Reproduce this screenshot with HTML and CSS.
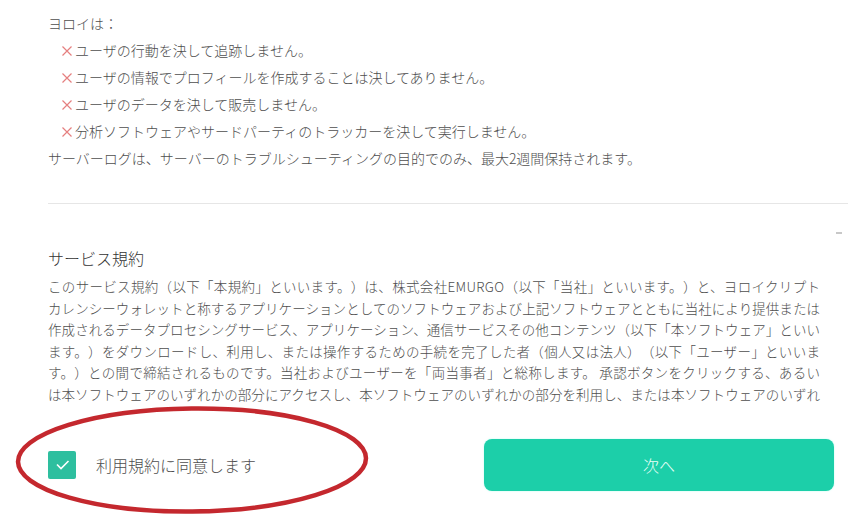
FILE: index.html
```html
<!DOCTYPE html>
<html lang="ja">
<head>
<meta charset="utf-8">
<title>サービス規約</title>
<link rel="stylesheet" href="styles.css">
</head>
<body>
<div class="page">
  <div class="scroll">
    <div class="content">
      <section class="privacy">
        <p class="line">ヨロイは：</p>
        <ul class="nots">
          <li><svg class="cross" viewBox="0 0 14 14" width="14" height="14"><path d="M2.5 2.5 L11.5 11.5 M11.5 2.5 L2.5 11.5"/></svg>ユーザの行動を決して追跡しません。</li>
          <li><svg class="cross" viewBox="0 0 14 14" width="14" height="14"><path d="M2.5 2.5 L11.5 11.5 M11.5 2.5 L2.5 11.5"/></svg>ユーザの情報でプロフィールを作成することは決してありません。</li>
          <li><svg class="cross" viewBox="0 0 14 14" width="14" height="14"><path d="M2.5 2.5 L11.5 11.5 M11.5 2.5 L2.5 11.5"/></svg>ユーザのデータを決して販売しません。</li>
          <li><svg class="cross" viewBox="0 0 14 14" width="14" height="14"><path d="M2.5 2.5 L11.5 11.5 M11.5 2.5 L2.5 11.5"/></svg>分析ソフトウェアやサードパーティのトラッカーを決して実行しません。</li>
        </ul>
        <p class="line">サーバーログは、サーバーのトラブルシューティングの目的でのみ、最大2週間保持されます。</p>
      </section>
      <hr class="divider">
      <section class="terms">
        <h2 class="terms-title">サービス規約</h2>
        <p class="terms-text">このサービス規約（以下「本規約」といいます。）は、株式会社<span class="latin">EMURGO</span>（以下「当社」といいます。）と、ヨロイクリプト<br>カレンシーウォレットと称するアプリケーションとしてのソフトウェアおよび上記ソフトウェアとともに当社により提供または<br>作成されるデータプロセシングサービス、アプリケーション、通信サービスその他コンテンツ（以下「本ソフトウェア」といい<br>ます。）をダウンロードし、利用し、または操作するための手続を完了した者（個人又は法人）（以下「ユーザー」といいま<br>す。）との間で締結されるものです。当社およびユーザーを「両当事者」と総称します。 承認ボタンをクリックする、あるい<br>は本ソフトウェアのいずれかの部分にアクセスし、本ソフトウェアのいずれかの部分を利用し、または本ソフトウェアのいずれ</p>
      </section>
    </div>
    <div class="thumb"></div>
  </div>
  <footer class="actions">
    <label class="agree">
      <span class="checkbox"><svg viewBox="0 0 28 28" width="28" height="28"><path d="M9 13.5 L13 17.5 L20.5 10"/></svg></span>
      <span class="agree-text">利用規約に同意します</span>
    </label>
    <button class="next" type="button">次へ</button>
  </footer>
  <svg class="annotation" viewBox="0 0 862 530" width="862" height="530"><ellipse cx="192" cy="460" rx="174" ry="51.5" transform="rotate(-0.6 192 460)"/></svg>
</div>
</body>
</html>
```
FILE: styles.css
```css
* { box-sizing: border-box; }
html, body { margin: 0; padding: 0; background: #ffffff; }
body {
  font-family: "Noto Sans CJK JP", "Noto Sans", sans-serif;
  font-weight: 300;
  color: #4e4e4e;
  text-spacing-trim: space-all;
}
.page {
  position: relative;
  width: 862px;
  height: 530px;
  overflow: hidden;
}
.scroll {
  position: relative;
  height: 405px;
  overflow: hidden;
}
.content {
  padding: 10px 14px 0 48px;
}
.privacy { font-size: 14px; line-height: 27px; }
.line { margin: 0; }
.nots { list-style: none; margin: 0; padding: 0 0 0 12px; }
.nots li { display: flex; align-items: center; }
.cross {
  flex: none;
  margin-right: 1px;
  fill: none;
  stroke: #e57f7f;
  stroke-width: 1.2;
}
.divider {
  border: 0;
  border-top: 1px solid #e6e6e6;
  margin: 31px 0 42px 0;
  height: 0;
}
.terms-title {
  margin: 0;
  font-size: 16px;
  line-height: 24px;
  font-weight: 300;
  color: #333333;
}
.terms-text {
  margin: 6px 0 0 0;
  width: 772px;
  font-size: 13.5px;
  line-height: 1.6;
  text-align: justify;
  text-align-last: justify;
}
.latin { letter-spacing: 0.3px; }
.thumb {
  position: absolute;
  left: 836px;
  top: 232px;
  width: 6px;
  height: 2px;
  background: #c8c8c8;
}
.actions {
  display: flex;
  align-items: center;
  padding: 34px 28px 0 48px;
}
.agree {
  display: flex;
  align-items: center;
  gap: 20px;
  height: 52px;
}
.checkbox {
  width: 28px;
  height: 28px;
  border-radius: 2px;
  background: #2ebf9f;
  display: flex;
  margin-top: -1px;
}
.checkbox svg { fill: none; stroke: #ffffff; stroke-width: 1.6; }
.agree-text { font-size: 16px; color: #4e4e4e; }
.next {
  margin-left: auto;
  width: 350px;
  height: 52px;
  border: 0;
  border-radius: 8px;
  background: #1ccfa9;
  color: #e9fff8;
  font-family: "Noto Sans CJK JP", "Noto Sans", sans-serif;
  font-weight: 300;
  font-size: 16px;
  box-shadow: 0 0 2px #b8fff0;
}
.annotation {
  position: absolute;
  left: 0;
  top: 0;
  pointer-events: none;
}
.annotation ellipse { fill: none; stroke: #c4282e; stroke-width: 4.5; }
```
